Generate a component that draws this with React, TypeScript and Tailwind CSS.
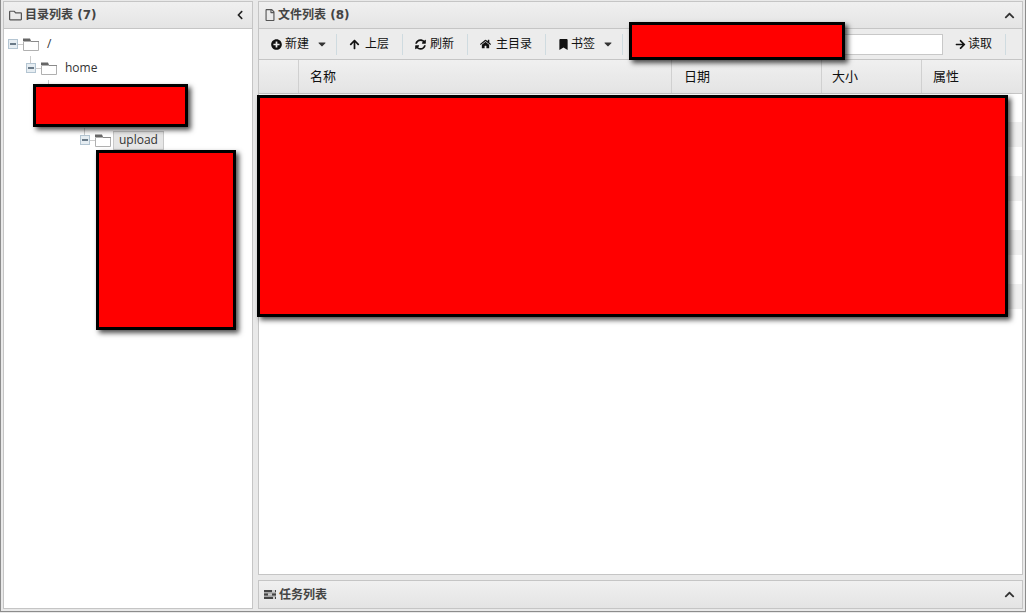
import React from 'react';
import { FaPlusCircle, FaArrowUp, FaSyncAlt, FaHome, FaBookmark, FaArrowRight, FaChevronUp, FaChevronLeft, FaCaretDown, FaRegFolder, FaRegFile } from 'react-icons/fa';

function Folder() {
  return (
    <svg width="16" height="13" viewBox="0 0 16 13" className="shrink-0">
      <path d="M0.5 3.5H15.5V12.5H0.5Z" fill="#fff" stroke="#b0b0b0" />
      <path d="M0 0.5H7L8 3H0Z" fill="#666" />
      <path d="M8 3H16V4H8Z" fill="#8a8a8a" />
    </svg>
  );
}

function Minus() {
  return (
    <span className="relative block h-[10px] w-[10px] shrink-0 border border-[#b4c5d2] bg-[#e6edf2]">
      <span className="absolute left-[1px] top-[3px] h-[2px] w-[6px] bg-[#6a7a88]" />
    </span>
  );
}

function TreeRow({ depth, label, selected, stem }: { depth: number; label: string; selected?: boolean; stem?: boolean }) {
  return (
    <div className="relative flex h-[24px] items-center" style={{ paddingLeft: depth * 18 + 4 }}>
      {stem && <span className="absolute top-0 h-[7px] w-[1px] bg-[#ccc]" style={{ left: depth * 18 + 8 }} />}
      <Minus />
      <span className="h-[1px] w-[5px] shrink-0 bg-[#ccc]" />
      <Folder />
      {selected ? (
        <span className="ml-[2px] flex h-[19px] items-center border border-[#c8c8c8] bg-[#e6e6e6] px-[5px] text-[12px] text-[#333]">{label}</span>
      ) : (
        <span className="ml-[8px] text-[12px] text-[#333]">{label}</span>
      )}
    </div>
  );
}

function Sep() {
  return <span className="h-[21px] w-[1px] shrink-0 bg-[#cfdbe0]" />;
}

function Btn({ w, icon, label, gap, caret }: { w: string; icon: React.ReactNode; label: string; gap: string; caret?: boolean }) {
  return (
    <div className={`flex h-full shrink-0 items-center pl-[12px] text-[12px] text-[#111] ${w}`}>
      <span className="flex w-[11px] justify-center text-[#111]">{icon}</span>
      <span className={gap}>{label}</span>
      {caret && <FaCaretDown className="ml-[7px] text-[12px] text-[#333]" />}
    </div>
  );
}

function Th({ w, pl, label }: { w: string; pl: string; label: string }) {
  return (
    <div className={`flex h-full shrink-0 items-center border-r border-[#d0d0d0] text-[13px] text-[#111] ${w} ${pl}`}>{label}</div>
  );
}

const head = 'bg-gradient-to-b from-[#f0f0f0] to-[#e4e4e4]';
const headFont = "font-['DejaVu_Sans','Noto_Sans_CJK_SC',sans-serif]";
const redact = 'absolute border-[3px] border-black bg-[#ff0000] shadow-[3px_3px_5px_rgba(0,0,0,0.7)]';

export default function App() {
  return (
    <div className="relative flex h-[613px] w-[1026px] overflow-hidden bg-[#e9e9e9] font-['Open_Sans','Noto_Sans_CJK_SC',sans-serif]">
      <div className="flex h-[612px] w-full border-x border-b border-[#8c8c8c] pl-[2px] pr-[2px] pt-[1px]">
        {/* left panel */}
        <div className="flex h-[608px] w-[250px] shrink-0 flex-col border border-[#c5c5c5] bg-white">
          <div className={`flex h-[27px] shrink-0 items-center border-b border-[#c5c5c5] pl-[5px] pr-[7px] text-[12px] font-bold text-[#444] ${head} ${headFont}`}>
            <FaRegFolder className="text-[13px] text-[#555]" />
            <span className="ml-[3px]">目录列表 (7)</span>
            <FaChevronLeft className="ml-auto text-[10px] text-[#222]" />
          </div>
          <div className="flex flex-col pt-[3px]">
            <TreeRow depth={0} label="/" />
            <TreeRow depth={1} label="home" stem />
            <TreeRow depth={2} label="" stem />
            <TreeRow depth={3} label="" stem />
            <TreeRow depth={4} label="upload" selected stem />
          </div>
        </div>
        {/* right column */}
        <div className="ml-[5px] flex h-[608px] w-[765px] shrink-0 flex-col">
          <div className="flex h-[574px] shrink-0 flex-col border border-[#c5c5c5] bg-white">
            <div className={`flex h-[27px] shrink-0 items-center border-b border-[#c5c5c5] pl-[5px] pr-[7px] text-[12px] font-bold text-[#444] ${head} ${headFont}`}>
              <FaRegFile className="text-[12px] text-[#555]" />
              <span className="ml-[2px]">文件列表 (8)</span>
              <FaChevronUp className="ml-auto text-[11px] text-[#333]" />
            </div>
            <div className="flex h-[31px] shrink-0 items-center border-b border-[#c5c5c5] bg-[#ececec]">
              <Btn w="w-[77px]" icon={<FaPlusCircle className="text-[11px]" />} label="新建" gap="ml-[3px]" caret />
              <Sep />
              <Btn w="w-[65px]" icon={<FaArrowUp className="text-[11px]" />} label="上层" gap="ml-[5px]" />
              <Sep />
              <Btn w="w-[64px]" icon={<FaSyncAlt className="text-[11px]" />} label="刷新" gap="ml-[4px]" />
              <Sep />
              <Btn w="w-[77px]" icon={<FaHome className="text-[12px]" />} label="主目录" gap="ml-[5px]" />
              <Sep />
              <Btn w="w-[76px]" icon={<FaBookmark className="text-[11px]" />} label="书签" gap="ml-[2px]" caret />
              <Sep />
              <div className="ml-[7px] h-[21px] w-[313px] shrink-0 border border-[#c8c8c8] bg-white" />
              <Btn w="w-[62px]" icon={<FaArrowRight className="text-[11px]" />} label="读取" gap="ml-[2px]" />
              <Sep />
            </div>
            <div className={`flex h-[34px] shrink-0 items-center border-b border-[#c5c5c5] ${head}`}>
              <div className="h-full w-[40px] shrink-0 border-r border-[#d0d0d0]" />
              <Th w="w-[373px]" pl="pl-[11px]" label="名称" />
              <Th w="w-[150px]" pl="pl-[12px]" label="日期" />
              <Th w="w-[100px]" pl="pl-[10px]" label="大小" />
              <div className="flex h-full flex-1 items-center pl-[11px] text-[13px] text-[#111]">属性</div>
            </div>
            <div className="flex min-h-0 flex-1 flex-col pt-[1px]">
              {[0, 1, 2, 3, 4, 5, 6, 7].map((i) => (
                <div key={i} className="h-[27px] shrink-0">
                  {i % 2 === 1 && <div className="h-[25px] bg-[#f0f0f0]" />}
                </div>
              ))}
            </div>
          </div>
          <div className={`mt-[5px] flex h-[29px] shrink-0 items-center border border-[#c5c5c5] pl-[5px] pr-[7px] text-[12px] font-bold text-[#444] ${head} ${headFont}`}>
            <svg width="12" height="9" viewBox="0 0 12 9" className="shrink-0">
              <rect x="0" y="0" width="12" height="2.4" fill="#444" />
              <rect x="8" y="0" width="3" height="2.4" fill="#ccc" />
              <rect x="0" y="3.3" width="12" height="2.4" fill="#444" />
              <rect x="4" y="3.3" width="4" height="2.4" fill="#ccc" />
              <rect x="0" y="6.6" width="12" height="2.4" fill="#444" />
              <rect x="9" y="6.6" width="2" height="2.4" fill="#ccc" />
            </svg>
            <span className="ml-[3px]">任务列表</span>
            <FaChevronUp className="ml-auto text-[11px] text-[#333]" />
          </div>
        </div>
      </div>
      {/* redaction overlays */}
      <div className={`${redact} left-[33px] top-[84px] h-[43px] w-[155px]`} />
      <div className={`${redact} left-[96px] top-[150px] h-[180px] w-[140px]`} />
      <div className={`${redact} left-[629px] top-[22px] h-[38px] w-[216px]`} />
      <div className={`${redact} left-[257px] top-[95px] h-[222px] w-[751px]`} />
    </div>
  );
}
